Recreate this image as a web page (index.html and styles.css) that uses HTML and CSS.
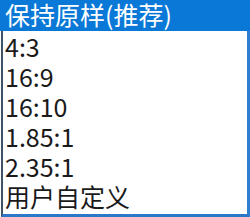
FILE: index.html
```html
<html>
<head>
  <meta charset="utf-8">
  <title>画面比例</title>
  <link rel="stylesheet" href="styles.css">
</head>
<body>
  <ul class="dropdown">
    <li class="option selected">保持原样(推荐)</li>
    <li class="option">4:3</li>
    <li class="option">16:9</li>
    <li class="option">16:10</li>
    <li class="option">1.85:1</li>
    <li class="option">2.35:1</li>
    <li class="option">用户自定义</li>
  </ul>
</body>
</html>
```

FILE: styles.css
```css
body {
  margin: 0;
  padding: 0;
  width: 250px;
  height: 217px;
  overflow: hidden;
  background: #ffffff;
  font-family: "Noto Sans CJK SC", "Noto Sans", sans-serif;
}
.dropdown {
  list-style: none;
  margin: 0;
  padding: 0 0 0 0;
  width: 250px;
  height: 217px;
  box-sizing: border-box;
  border-left: 2px solid #3f5366;
  border-right: 3px solid #2f7fd0;
  border-bottom: 3px solid #2b78c8;
  margin-left: 1px;
  width: 249px;
}
.option {
  height: 30px;
  line-height: 30px;
  padding-left: 2px;
  font-size: 25px;
  color: #1a1a1a;
  white-space: nowrap;
}
.option.selected {
  height: 31px;
  line-height: 29px;
  margin-left: -3px;
  margin-right: -3px;
  padding-left: 5px;
  background: #0a78d7;
  color: #ffffff;
}
```
